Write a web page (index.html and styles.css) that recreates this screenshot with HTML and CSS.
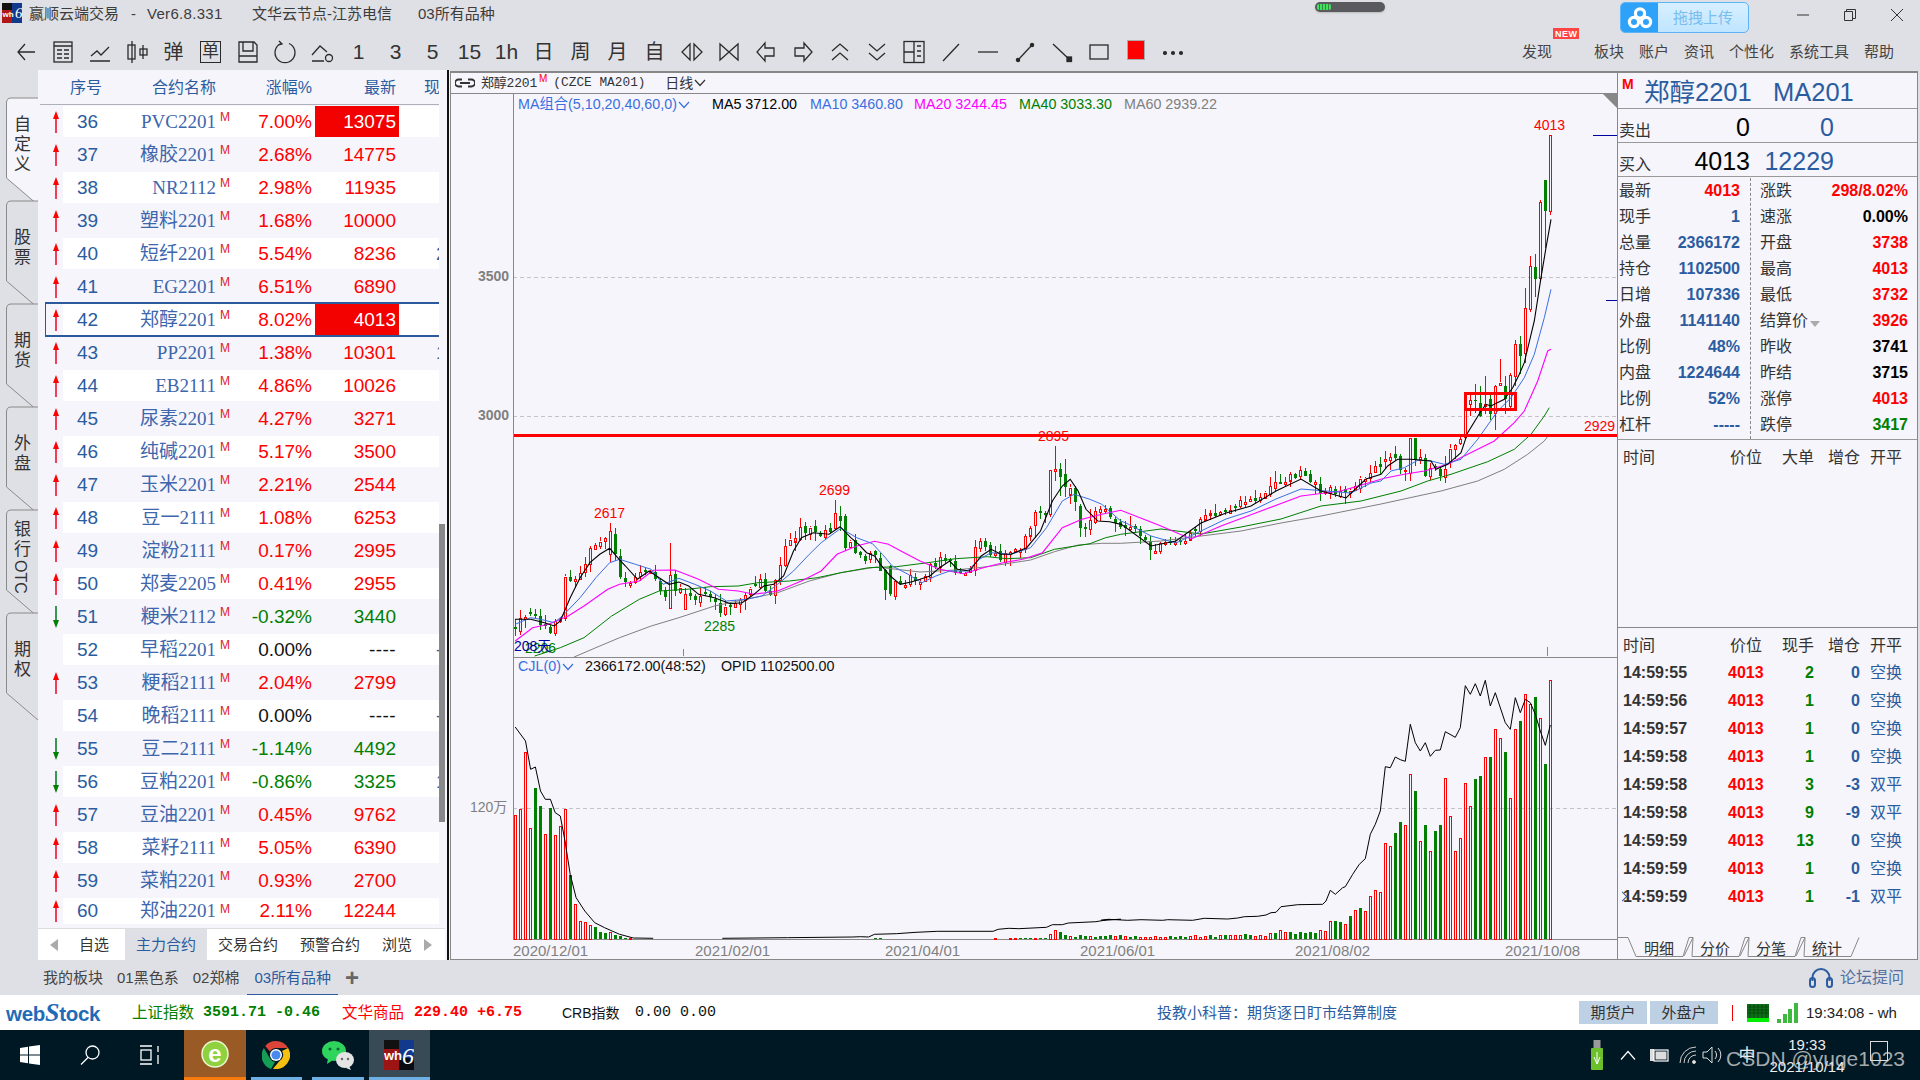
FILE: index.html
```html
<!DOCTYPE html>
<html lang="zh">
<head>
<meta charset="utf-8">
<title>赢顺云端交易</title>
<link rel="stylesheet" href="styles.css">
</head>
<body>
<svg class="defs" width="0" height="0">
  <symbol id="up" viewBox="0 0 8 22"><path d="M4 22V5" stroke="#f01030" stroke-width="1.6"/><path d="M4 0L7 8H1z" fill="#f00"/></symbol>
  <symbol id="down" viewBox="0 0 8 22"><path d="M4 0V17" stroke="#0a7f2a" stroke-width="1.6"/><path d="M4 22L7 14H1z" fill="#007f00"/></symbol>
</svg>
<div class="app">
  <header class="titlebar">
    <svg class="app-logo" viewBox="0 0 20 20"><rect width="10" height="20" fill="#b01818"/><rect width="10" height="7" fill="#111"/><rect x="10" width="10" height="20" fill="#123a8c"/><text x="0.5" y="14" class="logo-t">wh</text><text x="13" y="15" class="logo-six">6</text></svg>
    <span class="t1">赢顺云端交易</span><span class="t2">-</span><span class="t3">Ver6.8.331</span><span class="t4">文华云节点-江苏电信</span><span class="t5">03所有品种</span>
    <div class="capsule"><span class="capsule-g"></span></div>
    <div class="upload"><span class="upload-ico"><svg viewBox="0 0 26 22" width="26" height="22"><g fill="none" stroke="#fff" stroke-width="3.2"><circle cx="13" cy="6.5" r="4.6"/><circle cx="7" cy="15" r="4.6"/><circle cx="19" cy="15" r="4.6"/></g></svg></span><span class="upload-t">拖拽上传</span></div>
    <div class="winbtns">
      <span class="winbtn"><svg width="14" height="14" viewBox="0 0 14 14"><path d="M1 7h12" stroke="#333"/></svg></span>
      <span class="winbtn"><svg width="14" height="14" viewBox="0 0 14 14"><path d="M1.5 3.5h8v9h-8zM3.5 3.5v-2h9v9h-3" fill="none" stroke="#333"/></svg></span>
      <span class="winbtn"><svg width="14" height="14" viewBox="0 0 14 14"><path d="M1 1l12 12M13 1L1 13" stroke="#333"/></svg></span>
    </div>
  </header>
  <nav class="toolbar">
    <span class="ti"><svg viewBox="0 0 24 24"><path d="M21 12H4M11 4l-7 8 7 8"/></svg></span>
    <span class="ti"><svg viewBox="0 0 24 24"><rect x="3" y="2" width="18" height="20"/><path d="M3 6h18M6 10h5M13 10h5M6 14h5M13 14h5M6 18h5M13 18h5"/></svg></span>
    <span class="ti"><svg viewBox="0 0 24 24"><path d="M3 16l6-5 4 4 8-8M2 21h20"/></svg></span>
    <span class="ti"><svg viewBox="0 0 24 24"><path d="M7 1v22M18 5v14"/><rect x="3" y="5" width="7" height="14"/><rect x="15" y="9" width="7" height="6"/></svg></span>
    <span class="ti ti-t ti-c">弹</span>
    <span class="ti"><span class="ti-box">单</span></span>
    <span class="ti"><svg viewBox="0 0 24 24"><path d="M3 2h15l3 3v17H3zM7 2v9h10V2M3 16h18"/></svg></span>
    <span class="ti"><svg viewBox="0 0 24 24"><path d="M8 3.5a10 10 0 1 0 8 0M6 1l3 3-4 1"/></svg></span>
    <span class="ti"><svg viewBox="0 0 24 24"><path d="M2 15l8-9 7 6M2 21h12"/><circle cx="19" cy="18" r="3.5"/></svg></span>
    <span class="ti ti-t">1</span><span class="ti ti-t">3</span><span class="ti ti-t">5</span><span class="ti ti-t">15</span><span class="ti ti-t">1h</span>
    <span class="ti ti-t ti-c">日</span><span class="ti ti-t ti-c">周</span><span class="ti ti-t ti-c">月</span><span class="ti ti-t ti-c">自</span>
    <span class="ti"><svg viewBox="0 0 24 24"><path d="M10 4L2 12l8 8zM14 4l8 8-8 8z"/></svg></span>
    <span class="ti"><svg viewBox="0 0 24 24"><path d="M3 4v16l9-8zM21 4v16l-9-8z"/></svg></span>
    <span class="ti"><svg viewBox="0 0 24 24"><path d="M11 3L3 12l8 9v-5h9V8h-9z"/></svg></span>
    <span class="ti"><svg viewBox="0 0 24 24"><path d="M13 3l8 9-8 9v-5H4V8h9z"/></svg></span>
    <span class="ti"><svg viewBox="0 0 24 24"><path d="M4 11l8-7 8 7M4 20l8-7 8 7"/></svg></span>
    <span class="ti"><svg viewBox="0 0 24 24"><path d="M4 4l8 7 8-7M4 13l8 7 8-7"/></svg></span>
    <span class="ti"><svg viewBox="0 0 24 24"><rect x="2" y="1.5" width="20" height="21"/><path d="M2 12h10M12 1.5v21M15 6h4M15 11h4M15 16h4"/></svg></span>
    <span class="ti"><svg viewBox="0 0 24 24"><path d="M4 21L20 4"/></svg></span>
    <span class="ti"><svg viewBox="0 0 24 24"><path d="M2 12h20"/></svg></span>
    <span class="ti"><svg viewBox="0 0 24 24"><path d="M5 20L19 5"/><circle cx="5" cy="20" r="1.6" class="ico-fill"/><circle cx="19" cy="5" r="1.6" class="ico-fill"/></svg></span>
    <span class="ti"><svg viewBox="0 0 24 24"><path d="M3 4l17 16"/><rect x="17" y="17" width="4.5" height="4.5" class="ico-fill"/></svg></span>
    <span class="ti"><svg viewBox="0 0 24 24"><rect x="3" y="5" width="18" height="14"/></svg></span>
    <span class="ti"><span class="red-sq"></span></span>
    <span class="ti"><svg viewBox="0 0 24 24"><circle cx="4" cy="13" r="1.4" class="ico-fill"/><circle cx="12" cy="13" r="1.4" class="ico-fill"/><circle cx="20" cy="13" r="1.4" class="ico-fill"/></svg></span>
    <div class="menu">
      <span class="menu-i menu-new">发现<em class="new">NEW</em></span>
      <span class="menu-i">板块</span><span class="menu-i">账户</span><span class="menu-i">资讯</span><span class="menu-i">个性化</span><span class="menu-i">系统工具</span><span class="menu-i">帮助</span>
    </div>
  </nav>
  <main class="main">
    <aside class="sidetabs">
      <div class="stab active"><svg viewBox="0 0 38 108"><path d="M38 0H11q-4.500 0-4.500 5V80L38 107"/></svg><span>自定义</span></div>
      <div class="stab"><svg viewBox="0 0 38 108"><path d="M38 0H11q-4.500 0-4.500 5V80L38 107"/></svg><span>股票</span></div>
      <div class="stab"><svg viewBox="0 0 38 108"><path d="M38 0H11q-4.500 0-4.500 5V80L38 107"/></svg><span>期货</span></div>
      <div class="stab"><svg viewBox="0 0 38 108"><path d="M38 0H11q-4.500 0-4.500 5V80L38 107"/></svg><span>外盘</span></div>
      <div class="stab"><svg viewBox="0 0 38 108"><path d="M38 0H11q-4.500 0-4.500 5V80L38 107"/></svg><span>银行<u>OTC</u></span></div>
      <div class="stab"><svg viewBox="0 0 38 108"><path d="M38 0H11q-4.500 0-4.500 5V80L38 107"/></svg><span>期权</span></div>
    </aside>
    <section class="list">
      <div class="lh"><span class="h1">序号</span><span class="h2">合约名称</span><span class="h3">涨幅%</span><span class="h4">最新</span><span class="h5"><b>现手</b></span></div>
      <div class="lbody">
        <div class="rows">
          <div class="row w"><svg class="ar"><use href="#up"/></svg><div class="band"><span class="seq">36</span><span class="nm">PVC2201</span><i>M</i><span class="pct r">7.00%</span><span class="px r hot">13075</span></div></div>
          <div class="row"><svg class="ar"><use href="#up"/></svg><div class="band"><span class="seq">37</span><span class="nm">橡胶2201</span><i>M</i><span class="pct r">2.68%</span><span class="px r">14775</span></div></div>
          <div class="row w"><svg class="ar"><use href="#up"/></svg><div class="band"><span class="seq">38</span><span class="nm">NR2112</span><i>M</i><span class="pct r">2.98%</span><span class="px r">11935</span></div></div>
          <div class="row"><svg class="ar"><use href="#up"/></svg><div class="band"><span class="seq">39</span><span class="nm">塑料2201</span><i>M</i><span class="pct r">1.68%</span><span class="px r">10000</span></div></div>
          <div class="row w"><svg class="ar"><use href="#up"/></svg><div class="band"><span class="seq">40</span><span class="nm">短纤2201</span><i>M</i><span class="pct r">5.54%</span><span class="px r">8236</span><span class="nx">2</span></div></div>
          <div class="row"><svg class="ar"><use href="#up"/></svg><div class="band"><span class="seq">41</span><span class="nm">EG2201</span><i>M</i><span class="pct r">6.51%</span><span class="px r">6890</span></div></div>
          <div class="row w sel"><svg class="ar"><use href="#up"/></svg><div class="band"><span class="seq">42</span><span class="nm">郑醇2201</span><i>M</i><span class="pct r">8.02%</span><span class="px r hot">4013</span></div></div>
          <div class="row"><svg class="ar"><use href="#up"/></svg><div class="band"><span class="seq">43</span><span class="nm">PP2201</span><i>M</i><span class="pct r">1.38%</span><span class="px r">10301</span><span class="nx">1</span></div></div>
          <div class="row w"><svg class="ar"><use href="#up"/></svg><div class="band"><span class="seq">44</span><span class="nm">EB2111</span><i>M</i><span class="pct r">4.86%</span><span class="px r">10026</span></div></div>
          <div class="row"><svg class="ar"><use href="#up"/></svg><div class="band"><span class="seq">45</span><span class="nm">尿素2201</span><i>M</i><span class="pct r">4.27%</span><span class="px r">3271</span></div></div>
          <div class="row w"><svg class="ar"><use href="#up"/></svg><div class="band"><span class="seq">46</span><span class="nm">纯碱2201</span><i>M</i><span class="pct r">5.17%</span><span class="px r">3500</span></div></div>
          <div class="row"><svg class="ar"><use href="#up"/></svg><div class="band"><span class="seq">47</span><span class="nm">玉米2201</span><i>M</i><span class="pct r">2.21%</span><span class="px r">2544</span></div></div>
          <div class="row w"><svg class="ar"><use href="#up"/></svg><div class="band"><span class="seq">48</span><span class="nm">豆一2111</span><i>M</i><span class="pct r">1.08%</span><span class="px r">6253</span></div></div>
          <div class="row"><svg class="ar"><use href="#up"/></svg><div class="band"><span class="seq">49</span><span class="nm">淀粉2111</span><i>M</i><span class="pct r">0.17%</span><span class="px r">2995</span></div></div>
          <div class="row w"><svg class="ar"><use href="#up"/></svg><div class="band"><span class="seq">50</span><span class="nm">郑麦2205</span><i>M</i><span class="pct r">0.41%</span><span class="px r">2955</span></div></div>
          <div class="row"><svg class="ar"><use href="#down"/></svg><div class="band"><span class="seq">51</span><span class="nm">粳米2112</span><i>M</i><span class="pct g">-0.32%</span><span class="px g">3440</span></div></div>
          <div class="row w"><span class="ar"></span><div class="band"><span class="seq">52</span><span class="nm">早稻2201</span><i>M</i><span class="pct k">0.00%</span><span class="px k dash">----</span><span class="nx">-</span></div></div>
          <div class="row"><svg class="ar"><use href="#up"/></svg><div class="band"><span class="seq">53</span><span class="nm">粳稻2111</span><i>M</i><span class="pct r">2.04%</span><span class="px r">2799</span></div></div>
          <div class="row w"><span class="ar"></span><div class="band"><span class="seq">54</span><span class="nm">晚稻2111</span><i>M</i><span class="pct k">0.00%</span><span class="px k dash">----</span><span class="nx">-</span></div></div>
          <div class="row"><svg class="ar"><use href="#down"/></svg><div class="band"><span class="seq">55</span><span class="nm">豆二2111</span><i>M</i><span class="pct g">-1.14%</span><span class="px g">4492</span></div></div>
          <div class="row w"><svg class="ar"><use href="#down"/></svg><div class="band"><span class="seq">56</span><span class="nm">豆粕2201</span><i>M</i><span class="pct g">-0.86%</span><span class="px g">3325</span><span class="nx">1</span></div></div>
          <div class="row"><svg class="ar"><use href="#up"/></svg><div class="band"><span class="seq">57</span><span class="nm">豆油2201</span><i>M</i><span class="pct r">0.45%</span><span class="px r">9762</span></div></div>
          <div class="row w"><svg class="ar"><use href="#up"/></svg><div class="band"><span class="seq">58</span><span class="nm">菜籽2111</span><i>M</i><span class="pct r">5.05%</span><span class="px r">6390</span></div></div>
          <div class="row"><svg class="ar"><use href="#up"/></svg><div class="band"><span class="seq">59</span><span class="nm">菜粕2201</span><i>M</i><span class="pct r">0.93%</span><span class="px r">2700</span></div></div>
          <div class="row w last"><svg class="ar"><use href="#up"/></svg><div class="band"><span class="seq">60</span><span class="nm">郑油2201</span><i>M</i><span class="pct r">2.11%</span><span class="px r">12244</span></div></div>
        </div>
        <div class="track"><div class="thumb"></div></div>
      </div>
      <div class="ltabs">
        <span class="la la-l"></span>
        <span class="lt lt1">自选</span><span class="lt lt2 on">主力合约</span><span class="lt lt3">交易合约</span><span class="lt lt3">预警合约</span><span class="lt lt4">浏览</span>
        <span class="la la-r"></span>
      </div>
    </section>
    <div class="split"></div>
    <section class="chart">
      <div class="chead">
        <svg class="link" viewBox="0 0 20 10"><path d="M7 1.500H3.500a3.500 3.500 0 0 0 0 7H7M13 1.500h3.500a3.500 3.500 0 0 1 0 7H13M5 5h10" fill="none" stroke="#333" stroke-width="1.800"/></svg>
        <span class="cname">郑醇2201</span><sup class="csup">M</sup><span class="ccode">(CZCE MA201)</span>
        <span class="cper">日线</span><svg class="chev" viewBox="0 0 12 8"><path d="M1 1l5 5.500L11 1" fill="none" stroke="#333" stroke-width="1.200"/></svg>
      </div>
      <div class="cbody">
        <svg id="kchart" width="1166" height="866" viewBox="450 93 1166 866"></svg>
        <div class="legend">
          <span class="lg-ma">MA组合(5,10,20,40,60,0)<svg class="chev-b" viewBox="0 0 12 8"><path d="M1 1l5 5.500L11 1" fill="none" stroke="#3b6fe0" stroke-width="1.200"/></svg></span>
          <span class="lg-5">MA5 3712.00</span><span class="lg-10">MA10 3460.80</span><span class="lg-20">MA20 3244.45</span><span class="lg-40">MA40 3033.30</span><span class="lg-60">MA60 2939.22</span>
        </div>
        <div class="legend2"><span class="lg2-a">CJL(0)<svg class="chev-b" viewBox="0 0 12 8"><path d="M1 1l5 5.500L11 1" fill="none" stroke="#3b6fe0" stroke-width="1.200"/></svg></span><span class="lg2-b">2366172.00(48:52)</span><span class="lg2-c">OPID 1102500.00</span></div>
        <span class="corner"></span>
      </div>
    </section>
    <aside class="info">
      <div class="ihead"><b class="im">M</b><span class="iname">郑醇2201</span><span class="icode">MA201</span></div>
      <div class="quote q-sell"><span class="ql">卖出</span><span class="qp">0</span><span class="qv">0</span></div>
      <div class="quote"><span class="ql">买入</span><span class="qp">4013</span><span class="qv">12229</span></div>
      <div class="stats">
        <div class="scol scol-l">
          <div class="st"><span>最新</span><b class="red">4013</b></div>
          <div class="st"><span>现手</span><b class="blu">1</b></div>
          <div class="st"><span>总量</span><b class="blu">2366172</b></div>
          <div class="st"><span>持仓</span><b class="blu">1102500</b></div>
          <div class="st"><span>日增</span><b class="blu">107336</b></div>
          <div class="st"><span>外盘</span><b class="blu">1141140</b></div>
          <div class="st"><span>比例</span><b class="blu">48%</b></div>
          <div class="st"><span>内盘</span><b class="blu">1224644</b></div>
          <div class="st"><span>比例</span><b class="blu">52%</b></div>
          <div class="st"><span>杠杆</span><b class="blu">-----</b></div>
        </div>
        <div class="scol scol-r">
          <div class="st"><span>涨跌</span><b class="red">298/8.02%</b></div>
          <div class="st"><span>速涨</span><b>0.00%</b></div>
          <div class="st"><span>开盘</span><b class="red">3738</b></div>
          <div class="st"><span>最高</span><b class="red">4013</b></div>
          <div class="st"><span>最低</span><b class="red">3732</b></div>
          <div class="st"><span>结算价<em class="tri"></em></span><b class="red">3926</b></div>
          <div class="st"><span>昨收</span><b>3741</b></div>
          <div class="st"><span>昨结</span><b>3715</b></div>
          <div class="st"><span>涨停</span><b class="red">4013</b></div>
          <div class="st"><span>跌停</span><b class="grn">3417</b></div>
        </div>
      </div>
      <div class="bigs"><div class="tr th"><span class="c-t">时间</span><span class="c-p">价位</span><span class="c-h">大单</span><span class="c-o">增仓</span><span class="c-k">开平</span></div></div>
      <div class="trades">
        <div class="tr th"><span class="c-t">时间</span><span class="c-p">价位</span><span class="c-h">现手</span><span class="c-o">增仓</span><span class="c-k">开平</span></div>
        <div class="tr"><b class="c-t">14:59:55</b><b class="c-p red">4013</b><b class="c-h grn">2</b><b class="c-o blu">0</b><span class="c-k blu">空换</span></div>
        <div class="tr"><b class="c-t">14:59:56</b><b class="c-p red">4013</b><b class="c-h grn">1</b><b class="c-o blu">0</b><span class="c-k blu">空换</span></div>
        <div class="tr"><b class="c-t">14:59:57</b><b class="c-p red">4013</b><b class="c-h grn">1</b><b class="c-o blu">0</b><span class="c-k blu">空换</span></div>
        <div class="tr"><b class="c-t">14:59:58</b><b class="c-p red">4013</b><b class="c-h grn">1</b><b class="c-o blu">0</b><span class="c-k blu">空换</span></div>
        <div class="tr"><b class="c-t">14:59:58</b><b class="c-p red">4013</b><b class="c-h grn">3</b><b class="c-o blu">-3</b><span class="c-k blu">双平</span></div>
        <div class="tr"><b class="c-t">14:59:58</b><b class="c-p red">4013</b><b class="c-h grn">9</b><b class="c-o blu">-9</b><span class="c-k blu">双平</span></div>
        <div class="tr"><b class="c-t">14:59:59</b><b class="c-p red">4013</b><b class="c-h grn">13</b><b class="c-o blu">0</b><span class="c-k blu">空换</span></div>
        <div class="tr"><b class="c-t">14:59:59</b><b class="c-p red">4013</b><b class="c-h grn">1</b><b class="c-o blu">0</b><span class="c-k blu">空换</span></div>
        <div class="tr cur"><b class="c-t">14:59:59</b><b class="c-p red">4013</b><b class="c-h grn">1</b><b class="c-o blu">-1</b><span class="c-k blu">双平</span></div>
      </div>
      <div class="itabs">
        <svg class="itabs-bg" viewBox="0 0 300 21"><path d="M0 0.500H10L18 19.500H65L71 0.500H75L66 19M75 0.500L74 19.500H121L127 0.500H131L122 19M131 0.500L130 19.500H177L183 0.500H187L178 19M187 0.500L186 19.500H233L241 0.500" fill="none" stroke="#888"/></svg>
        <span class="it">明细</span><span class="it">分价</span><span class="it">分笔</span><span class="it">统计</span>
      </div>
    </aside>
  </main>
  <div class="boardbar">
    <span class="bb">我的板块</span><span class="bb">01黑色系</span><span class="bb">02郑棉</span><span class="bb on">03所有品种</span><span class="bb-plus">+</span>
    <div class="forum"><svg viewBox="0 0 24 20" width="24" height="20"><path d="M3.500 13V9.500a8.500 8.500 0 0 1 17 0V13" fill="none" stroke="#2b5ca0" stroke-width="2"/><rect x="1" y="10" width="5" height="9" rx="2.500" fill="none" stroke="#2b5ca0" stroke-width="2"/><rect x="18" y="10" width="5" height="9" rx="2.500" fill="none" stroke="#2b5ca0" stroke-width="2"/></svg><span>论坛提问</span></div>
  </div>
  <div class="statusbar">
    <span class="wslogo">web<b>S</b>tock</span>
    <span class="sb-l g">上证指数</span><span class="sb-v g sb-v1">3591.71 -0.46</span>
    <span class="sb-l r">文华商品</span><span class="sb-v r sb-v2">229.40 +6.75</span>
    <span class="sb-l k sb-crb">CRB指数</span><span class="sb-v k sb-v3">0.00 0.00</span>
    <span class="sb-news">投教小科普：期货逐日盯市结算制度</span>
    <span class="sb-btn">期货户</span><span class="sb-btn">外盘户</span>
    <span class="sb-sep"></span>
    <svg class="sb-mem" viewBox="0 0 22 18" width="22" height="18"><rect width="22" height="18" fill="#0f6f18"/><path d="M0 3h22M0 6h22M0 9h22M3 0v14M7 0v14M11 0v14M15 0v14M19 0v14" stroke="#064a0c"/><rect y="14" width="22" height="4" fill="#00ee00"/></svg>
    <svg class="sb-sig" viewBox="0 0 21 20" width="21" height="20"><rect x="0" y="16" width="4" height="4"/><rect x="6" y="11" width="4" height="9"/><rect x="11" y="6" width="4" height="14"/><rect x="17" y="0" width="4" height="20"/></svg>
    <span class="sb-time">19:34:08 - wh</span>
  </div>
  <footer class="taskbar">
    <span class="tb"><svg viewBox="0 0 20 20" width="20" height="20" fill="#fff"><path d="M0 3l8-1.200V9.500H0zM9 1.600L20 0v9.500H9zM0 10.500h8v7.700L0 17zM9 10.500h11V20L9 18.400z"/></svg></span>
    <span class="tb"><svg viewBox="0 0 20 20" width="20" height="20" fill="none" stroke="#fff" stroke-width="1.300"><circle cx="12.500" cy="7.500" r="6.500"/><path d="M8 12.500L1 19.500"/></svg></span>
    <span class="tb"><svg viewBox="0 0 20 20" width="20" height="20" fill="none" stroke="#fff" stroke-width="1.300"><path d="M0 1h12M0 19h12"/><rect x="1" y="5" width="10" height="10"/><path d="M18 1v6M18 10v9"/></svg></span>
    <span class="app-btn ab-e"><svg viewBox="0 0 30 30" width="30" height="30"><circle cx="15" cy="15" r="13" fill="#8fd13f"/><circle cx="15" cy="15" r="13" fill="none" stroke="#e8f8d0" stroke-width="1.500"/><text x="15" y="23" class="e-t">e</text></svg></span>
    <span class="app-btn ab-u"><svg viewBox="0 0 28 28" width="28" height="28"><path d="M14 0a14 14 0 0 1 12.100 7H14a7 7 0 0 0-6.100 3.500L3.200 5A14 14 0 0 1 14 0z" fill="#dc4437"/><path d="M1.900 7L8 17.500A7 7 0 0 0 13 21L9 28A14 14 0 0 1 1.900 7z" fill="#159d55"/><path d="M26.100 7A14 14 0 0 1 11 27.700L17.500 20A7 7 0 0 0 20 10z" fill="#f6c012"/><circle cx="14" cy="14" r="6" fill="#fff"/><circle cx="14" cy="14" r="4.600" fill="#4a8af0"/></svg></span>
    <span class="app-btn ab-u"><svg viewBox="0 0 32 30" width="32" height="30"><ellipse cx="12" cy="11" rx="12" ry="10" fill="#2ed45c"/><path d="M6 18l-1 6 6-4z" fill="#2ed45c"/><circle cx="8" cy="9" r="1.500" fill="#0a6a2c"/><circle cx="16" cy="9" r="1.500" fill="#0a6a2c"/><ellipse cx="23" cy="20" rx="9" ry="8" fill="#e4e4e4"/><path d="M27 26l2 4-5-2z" fill="#e4e4e4"/><circle cx="20" cy="19" r="1.200" fill="#666"/><circle cx="26" cy="19" r="1.200" fill="#666"/></svg></span>
    <span class="app-btn ab-w ab-u"><svg viewBox="0 0 30 30" width="30" height="30"><rect width="16" height="30" fill="#9c1414"/><rect width="16" height="9" fill="#111"/><rect x="15" width="15" height="30" fill="#123a8c"/><rect x="15" y="18" width="15" height="12" fill="#0a0a12"/><text x="0" y="20" class="wh-t">wh</text><text x="18" y="24" class="wh-6">6</text></svg></span>
    <div class="tray">
      <span class="tr-i i-usb"><svg viewBox="0 0 12 30" width="12" height="30"><rect x="2.500" width="7" height="8" fill="#999"/><rect y="8" width="12" height="22" rx="1" fill="#6cc02c"/><path d="M6 12v12M3 17l3 7 3-7" stroke="#fff" fill="none"/></svg></span>
      <span class="tr-i i-car"><svg viewBox="0 0 16 10" width="16" height="10"><path d="M1 9.500l7-8 7 8" fill="none" stroke="#fff" stroke-width="1.200"/></svg></span>
      <span class="tr-i i-bat"><svg viewBox="0 0 20 18" width="20" height="18"><rect x="1" y="3" width="4" height="12" fill="#ddd"/><rect x="5" y="4" width="14" height="11" fill="none" stroke="#fff" stroke-width="1.200"/><rect x="6.500" y="5.500" width="11" height="8" fill="#ddd"/></svg></span>
      <span class="tr-i i-wifi"><svg viewBox="0 0 18 18" width="18" height="18" fill="none" stroke="#ccc"><path d="M1 17a16 16 0 0 1 16-16M5 17a12 12 0 0 1 12-12M9 17a8 8 0 0 1 8-8"/><circle cx="15" cy="16" r="1.500" fill="#eee"/></svg></span>
      <span class="tr-i i-spk"><svg viewBox="0 0 22 22" width="22" height="22" fill="none" stroke="#ddd"><path d="M1 8h4l5-5v16l-5-5H1zM13 7a6 6 0 0 1 0 8M16 4a10 10 0 0 1 0 14"/></svg></span>
      <span class="tr-i i-zh">中</span>
      <span class="clock"><span>19:33</span><span>2021/10/14</span></span>
      <span class="notif"></span>
      <span class="wm">CSDN @yuge1023</span>
    </div>
  </footer>
</div>
<script src="chart.js"></script>
</body>
</html>
```
FILE: styles.css
```css
* { box-sizing: border-box; }
html, body { margin: 0; padding: 0; width: 1920px; height: 1080px; overflow: hidden; }
body { font-family: "Liberation Sans", "Noto Sans CJK SC", sans-serif; line-height: 1; background: #dfe0e5; color: #333; }
.defs { position: absolute; }
.app { width: 1920px; height: 1080px; display: flex; flex-direction: column; }

/* title */
.titlebar { height: 35px; display: flex; align-items: flex-start; font-size: 15px; color: #3c3c3c; position: relative; }
.app-logo { width: 20px; height: 20px; margin: 3px 0 0 2px; }
.logo-t { font: bold 8px "Liberation Sans", sans-serif; fill: #fff; }
.logo-six { font: italic 15px "Liberation Serif", serif; fill: #fff; }
.titlebar > span { line-height: 28px; white-space: nowrap; }
.t1 { margin-left: 7px; width: 90px; }
.t2 { margin-left: 12px; width: 16px; }
.t3 { width: 105px; letter-spacing: .3px; }
.t4 { width: 166px; }
.t5 { width: 90px; }
.capsule { position: absolute; left: 1315px; top: 2px; width: 70px; height: 10px; border-radius: 5px; background: #5a5a5e; box-shadow: 0 1px 2px #bbb; padding: 2px 0 0 2px; }
.capsule-g { display: block; width: 14px; height: 6px; border-radius: 2px; background: repeating-linear-gradient(90deg, #45e060 0 2px, #2f8a40 2px 3px); }
.upload { margin: 2px 0 0 auto; width: 129px; height: 31px; display: flex; border-radius: 5px; border: 1px solid #5cb3f5; overflow: hidden; background: linear-gradient(#d8f0ff, #bfe5ff); }
.upload-ico { width: 37px; background: #2ea1f8; display: flex; align-items: center; justify-content: center; }
.upload-t { flex: 1; text-align: center; font-size: 15px; line-height: 29px; color: #78bdf0; }
.winbtns { display: flex; margin-left: 30px; }
.winbtn { width: 47px; height: 30px; display: flex; align-items: center; justify-content: center; }

/* toolbar */
.toolbar { height: 35px; display: flex; align-items: center; padding: 0 0 2px 7px; position: relative; }
.ti { width: 37px; flex: none; height: 33px; display: flex; align-items: center; justify-content: center; color: #333; }
.ti svg { width: 24px; height: 24px; fill: none; stroke: #2a2a2a; stroke-width: 1.3; }
.ti svg .ico-fill { fill: #2a2a2a; }
.ti-t { font-size: 21px; }
.ti-c { font-size: 20px; }
.ti-box { width: 21px; height: 22px; border: 1.300px solid #2a2a2a; font-size: 17px; line-height: 19px; text-align: center; display: block; }
.red-sq { width: 18px; height: 20px; background: #f00; border: 1px solid #aaa; display: block; margin-top: -4px; }
.menu { margin-left: auto; display: flex; padding-right: 26px; font-size: 15px; color: #444; gap: 15px; }
.menu-new { margin-right: 27px; position: relative; }
.new { position: absolute; left: 31px; top: -16px; background: #f44; color: #fff; font: bold 9px "Liberation Sans", sans-serif; padding: 1px 2px; width: 26px; height: 11px; text-align: center; letter-spacing: .5px; }

/* main */
.main { height: 890px; display: flex; }
.sidetabs { width: 38px; flex: none; padding-top: 28px; }
.stab { height: 103px; position: relative; }
.stab svg { position: absolute; left: 0; top: 0; width: 38px; height: 108px; overflow: visible; }
.stab path { fill: #dfe0e5; stroke: #8a8a8a; }
.stab.active path { fill: #f5f5fb; }
.stab span { position: absolute; left: 12px; top: 47px; transform: translateY(-50%); writing-mode: vertical-rl; font-size: 17px; line-height: 17px; letter-spacing: 3px; color: #333; white-space: nowrap; }
.stab u { text-decoration: none; letter-spacing: 0; font-size: 16px; }

/* list */
.list { width: 409px; flex: none; background: #f5f5fb; display: flex; flex-direction: column; }
.lh { height: 35px; margin-left: 2px; display: flex; align-items: center; color: #2b5ca0; font-size: 16px; border-bottom: 1px solid #b0b0b8; width: 399px; padding-left: 5px; padding-top: 1px; }
.lh span { display: block; text-align: right; white-space: nowrap; }
.h1 { width: 57px; }
.h2 { width: 114px; }
.h3 { width: 96px; }
.h4 { width: 84px; }
.h5 { width: 43px; overflow: hidden; text-align: left !important; }
.h5 b { font-weight: 400; margin-left: 28px; display: block; width: 60px; }
.lbody { height: 819px; display: flex; overflow: hidden; padding-left: 7px; }
.rows { width: 394px; flex: none; overflow: hidden; }
.row { height: 33px; display: flex; align-items: center; font-size: 19px; position: relative; }
.row.last { height: 27px; }
.ar { width: 8px; height: 22px; margin: 0 3px 0 7px; flex: none; }
.band { flex: 1; height: 31px; display: flex; align-items: center; color: #2b5ca0; position: relative; overflow: hidden; }
.last .band { height: 26px; }
.w .band { background: #fff; }
.sel { outline: 2px solid #2b5a9c; outline-offset: -1px; width: 400px; }
.seq { width: 67px; padding-left: 14px; flex: none; }
.nm { width: 86px; flex: none; text-align: right; white-space: nowrap; font-family: "Liberation Serif", "Noto Sans CJK SC", serif; color: #3d66ad; }
.band i { font: normal 12px "Liberation Sans", sans-serif; color: #e01a2a; width: 16px; padding-left: 4px; flex: none; align-self: flex-start; margin-top: 4px; }
.pct { width: 80px; flex: none; text-align: right; }
.px { width: 84px; flex: none; margin-left: 3px; padding-right: 3px; text-align: right; height: 31px; line-height: 31px; }
.hot { background: #f30000; color: #fff !important; }
.r { color: #f00; }
.g { color: #007f00; }
.k { color: #111; }
.dash { letter-spacing: .4px; }
.nx { margin-left: 37px; flex: none; color: #2b5ca0; }
.track { width: 6px; flex: none; background: #f5f5fb; padding-top: 419px; }
.thumb { height: 298px; background: #888; }
.ltabs { height: 31px; margin-top: 5px; background: #fff; display: flex; align-items: center; font-size: 15px; width: 407px; position: relative; box-shadow: 0 -1px 0 #ddd; color: #333; }
.ltabs .lt { height: 31px; line-height: 31px; text-align: center; white-space: nowrap; }
.lt1 { width: 62px; margin-left: 5px; }
.lt2 { width: 82px; }
.lt3 { width: 82px; }
.lt4 { width: 52px; }
.lt.on { background: #dfe0e5; color: #2b5ca0; }
.la { width: 0; height: 0; border: 6px solid transparent; }
.la-l { border-right: 8px solid #aaa; border-left-width: 0; margin-left: 12px; }
.la-r { border-left: 8px solid #aaa; border-right-width: 0; margin-left: 1px; }
.split { width: 3px; flex: none; background: linear-gradient(90deg, #111 0 2px, #f5f5fb 2px); height: 890px; }

/* chart */
.chart { width: 1167px; flex: none; margin-top: 1px; background: #f5f5fb; border: 1px solid #888; border-width: 2px 0 1px 1px; display: flex; flex-direction: column; }
.chead { height: 21px; flex: none; display: flex; align-items: center; border-bottom: 1px solid #888; font-size: 14px; color: #333; }
.link { width: 20px; height: 10px; margin-left: 4px; }
.cname { margin-left: 6px; font-family: "Liberation Mono", "Noto Sans CJK SC", monospace; font-size: 13px; letter-spacing: -.2px; }
.csup { font-size: 10px; color: #f00; margin: -8px 0 0 2px; }
.ccode { margin-left: 6px; font-family: "Liberation Mono", monospace; font-size: 12.800px; width: 112px; }
.cper { font-size: 14px; }
.chev { width: 12px; height: 8px; margin-left: 1px; }
.cbody { position: relative; flex: 1; overflow: hidden; }
#kchart { display: block; }
#kchart text { font-family: "Liberation Sans", "Noto Sans CJK SC", sans-serif; }
.legend { position: absolute; left: 67px; top: 3px; display: flex; font-size: 14.300px; white-space: nowrap; }
.legend span { display: block; }
.chev-b { width: 12px; height: 8px; margin-left: 1px; }
.lg-ma { color: #3b6fe0; width: 194px; }
.lg-5 { color: #000; width: 98px; }
.lg-10 { color: #3b6fe0; width: 104px; }
.lg-20 { color: #f0f; width: 105px; }
.lg-40 { color: #007f00; width: 105px; }
.lg-60 { color: #808080; }
.legend2 { position: absolute; left: 67px; top: 565px; display: flex; font-size: 14.300px; white-space: nowrap; color: #111; }
.lg2-a { color: #3b6fe0; width: 67px; }
.lg2-b { width: 136px; }
.corner { position: absolute; right: 0; top: 0; border: 7px solid transparent; border-top: 7px solid #888; border-right: 7px solid #888; }

/* info */
.info { width: 301px; flex: none; margin-top: 1px; background: #f5f5fb; border: 1px solid #888; border-width: 2px 1px 1px 1px; display: flex; flex-direction: column; color: #333; }
.ihead { height: 36px; flex: none; border-bottom: 1px solid #999; display: flex; position: relative; color: #2b5ca0; font-size: 25.500px; line-height: 38px; white-space: nowrap; }
.im { position: absolute; left: 4px; top: 4px; font-size: 14px; line-height: 14px; color: #f00; }
.iname { margin-left: 26px; width: 129px; }
.icode { width: 90px; }
.quote { height: 34px; flex: none; border-bottom: 1px solid #999; display: flex; font-size: 25px; line-height: 36px; }
.ql { font-size: 16px; width: 36px; margin-left: 1px; line-height: 44px; }
.qp { width: 95px; text-align: right; color: #000; }
.qv { width: 84px; text-align: right; color: #2b5ca0; }
.stats { height: 263px; flex: none; border-bottom: 1px solid #999; display: flex; padding-top: 1px; }
.scol-l { width: 133px; border-right: 1px dashed #888; padding: 0 10px 0 1px; }
.scol-r { flex: 1; padding: 0 9px 0 9px; }
.st { height: 26px; display: flex; justify-content: space-between; align-items: center; font-size: 16px; }
.st b { color: #000; }
.st span { display: flex; align-items: flex-end; }
.tri { width: 0; height: 0; border: 5px solid transparent; border-top: 6px solid #aaa; border-bottom-width: 0; margin: 0 0 2px 2px; }
.st .red, .red { color: #f00; }
.st .blu, .blu { color: #2b5ca0; }
.st .grn, .grn { color: #007f00; }
.bigs { height: 188px; flex: none; border-bottom: 1px solid #888; padding-top: 8px; }
.trades { height: 309px; flex: none; padding-top: 8px; }
.tr { display: flex; height: 28px; align-items: center; font-size: 16px; position: relative; white-space: nowrap; }
.th { height: 20px; margin-bottom: 3px; }
.c-t { width: 110px; padding-left: 5px; flex: none; color: #333; }
.c-p { width: 50px; flex: none; }
.c-h { width: 36px; flex: none; text-align: right; }
.c-o { width: 46px; flex: none; text-align: right; }
.c-k { margin-left: 10px; font-weight: 400; }
.bigs .c-p, .th .c-p { padding-left: 2px; }
.cur::before { content: ""; position: absolute; left: 1px; top: 10px; width: 6px; height: 6px; border: solid #2b5ca0; border-width: 1px 1px 0 0; transform: rotate(45deg); }
.itabs { flex: 1; position: relative; display: flex; padding-left: 13px; font-size: 15px; align-items: center; }
.itabs-bg { position: absolute; left: 0; top: 0; width: 300px; height: 21px; }
.it { width: 56px; text-align: center; position: relative; color: #333; }

/* board bar */
.boardbar { height: 35px; display: flex; align-items: flex-start; padding-left: 36px; font-size: 15px; color: #444; }
.bb { height: 35px; line-height: 35px; padding: 0 7px; white-space: nowrap; }
.bb.on { color: #2b5ca0; border-bottom: 1px solid #2b5ca0; margin-left: 1px; }
.bb-plus { font-size: 24px; font-weight: 700; color: #666; margin-left: 7px; line-height: 35px; }
.forum { margin-left: auto; display: flex; align-items: center; gap: 7px; height: 35px; padding-right: 16px; color: #55709f; font-size: 16px; }

/* status bar */
.statusbar { height: 35px; background: #fff; display: flex; align-items: center; font-size: 15.500px; white-space: nowrap; }
.wslogo { width: 83px; margin-left: 6px; font: bold 20.500px "Liberation Sans", sans-serif; color: #1f6bb8; letter-spacing: -.3px; }
.wslogo b { font: italic bold 26px "Liberation Serif", serif; }
.sb-l { flex: none; }
.sb-l.g { margin-left: 43px; width: 71px; }
.sb-l.r { width: 72px; }
.sb-v { flex: none; font: bold 15px "Liberation Mono", monospace; }
.sb-v1 { width: 139px; }
.sb-v2 { width: 148px; }
.sb-crb { width: 73px; font-size: 14px; }
.sb-v.k { font-weight: 400; }
.sb-v3 { width: 522px; }
.sb-news { color: #2b5ca0; font-size: 15px; width: 422px; }
.sb-btn { width: 68px; height: 23px; background: #bed0e3; text-align: center; line-height: 23px; margin-right: 3px; font-size: 15px; color: #333; }
.sb-sep { width: 1px; height: 16px; background: #e00; margin: 0 14px 0 11px; }
.sb-sig { fill: #3eb83e; margin-left: 8px; }
.sb-time { margin-left: 8px; font-size: 15px; color: #222; }

/* taskbar */
.taskbar { height: 50px; background: #001824; display: flex; align-items: stretch; }
.tb { width: 60px; display: flex; align-items: center; justify-content: center; }
.app-btn { width: 61.500px; display: flex; align-items: center; justify-content: center; position: relative; }
.ab-e { margin-left: 4px; background: #995a26; border-bottom: 3px solid #f77a0c; }
.ab-u::after { content: ""; position: absolute; left: 5px; right: 5px; bottom: 0; height: 3px; background: #6fb0e4; }
.ab-w { background: #384a55; }
.ab-w::after { left: 0; right: 0; }
.e-t { font: bold 24px "Liberation Sans", sans-serif; fill: #fff; text-anchor: middle; }
.wh-t { font: bold 13px "Liberation Sans", sans-serif; fill: #fff; }
.wh-6 { font: italic 24px "Liberation Serif", serif; fill: #fff; }
.tray { margin-left: auto; display: flex; align-items: center; padding-right: 32px; position: relative; color: #eee; }
.tr-i { display: flex; align-items: center; justify-content: center; height: 50px; }
.i-usb { width: 31px; }
.i-car { width: 31px; }
.i-bat { width: 31px; }
.i-wifi { width: 27px; }
.i-spk { width: 24px; }
.i-zh { width: 44px; font-size: 17px; }
.clock { width: 76px; display: flex; flex-direction: column; align-items: center; gap: 7px; font-size: 15px; white-space: nowrap; }
.notif { width: 18px; height: 20px; border: 1px solid #ddd; margin-left: 25px; margin-top: -8px; }
.wm { position: absolute; right: 15px; top: 18px; font-size: 21px; color: rgba(220,220,220,.75); white-space: nowrap; }
```
FILE: chart.js
```js
(function () {
  var svg = document.getElementById('kchart');
  var RED = '#f00', GRN = '#007f00';
  var out = [];
  var seed = 12345;
  function rnd() { seed = (seed * 1103515245 + 12345) & 0x7fffffff; return seed / 0x7fffffff; }
  function X9(a) { return a.map(function (p) { return [500 + p[0] / 2.53, 420 + p[1] / 3]; }); }
  function X8(a) { return a.map(function (p) { return [1380 + p[0] / 3, 120 + p[1] / 3]; }); }
  function interp(path, x) {
    for (var k = 1; k < path.length; k++) {
      if (x <= path[k][0]) {
        var a = path[k - 1], b = path[k], t = (x - a[0]) / (b[0] - a[0] || 1);
        return a[1] + (b[1] - a[1]) * t;
      }
    }
    return path[path.length - 1][1];
  }
  function cx(i) { return 514 + 5 * i; }
  function rect(x, y, w, h, fill) { out.push('<rect x="' + x + '" y="' + y.toFixed(0) + '" width="' + w + '" height="' + Math.max(1, h).toFixed(0) + '" fill="' + fill + '" shape-rendering="crispEdges"/>'); }
  function hollow(x, y, w, h, col) {
    rect(x, y, w, 1, col); rect(x, y + h, w, 1, col); rect(x, y, 1, h, col); rect(x + w - 1, y, 1, h + 1, col);
  }
  function poly(pts, col, w) {
    out.push('<polyline fill="none" stroke="' + col + '" stroke-width="' + w + '" points="' + pts.map(function (p) { return p[0].toFixed(1) + ',' + p[1].toFixed(1); }).join(' ') + '"/>');
  }
  function txt(x, y, s, col, size, extra) {
    out.push('<text x="' + x + '" y="' + y + '" fill="' + col + '" font-size="' + size + '" ' + (extra || '') + '>' + s + '</text>');
  }
  function candle(i, top, bot, hi, lo, col) {
    var c = cx(i);
    if (bot - top < 1) bot = top + 1;
    if (col === RED) {
      rect(c, hi, 1, top - hi, col); rect(c, bot, 1, lo - bot, col);
      hollow(c - 1, Math.round(top), 3, Math.round(bot - top), col);
    } else {
      rect(c, hi, 1, lo - hi, col);
      rect(c - 1, top, 3, bot - top, col);
    }
  }

  /* grid */
  [276.5, 415.5, 807.5].forEach(function (y) {
    out.push('<path d="M512 ' + y + 'H1616" stroke="#c4c4c8" stroke-dasharray="4 3"/>');
  });

  /* price candles */
  var path1 = X9([[36, 620], [60, 580], [75, 570], [88, 575], [100, 620], [125, 625], [150, 580], [162, 480], [176, 480], [200, 465], [213, 425], [226, 365], [240, 370], [277, 345], [290, 370], [302, 470], [315, 490], [340, 470], [365, 445], [378, 455], [400, 510], [428, 520], [450, 490], [466, 540], [492, 535], [515, 525], [540, 535], [565, 565], [590, 535], [630, 510], [655, 480], [680, 520], [693, 470], [705, 440], [718, 375], [745, 360], [757, 310], [770, 330], [795, 335], [820, 340], [835, 345], [845, 280], [858, 290], [870, 320], [885, 375], [920, 410], [945, 410], [960, 480], [972, 500], [985, 480], [1010, 490], [1023, 490], [1035, 460], [1060, 480], [1075, 470], [1085, 440], [1110, 415], [1135, 415], [1150, 450], [1165, 470], [1187, 440], [1200, 380], [1225, 365], [1238, 400], [1265, 410], [1290, 380], [1315, 375], [1340, 310], [1352, 265], [1377, 270], [1390, 150], [1415, 150], [1427, 160], [1440, 210], [1465, 260], [1478, 320], [1490, 300], [1515, 260], [1540, 290], [1568, 310]]);
  var path = path1.concat([[1127, 524], [1151, 549], [1182, 539], [1200, 520], [1225, 508], [1249, 500], [1274, 484], [1298, 471], [1316, 487], [1347, 490], [1371, 471], [1384, 462]]);
  var ov = {
    19: [330, 400, 305, 425, RED], 20: [340, 400, 322, 420, GRN], 31: [462, 560, 365, 562, RED], 34: [520, 565, 500, 566, RED],
    41: [545, 575, 520, 588, GRN], 64: [275, 320, 237, 325, RED], 65: [285, 300, 255, 330, GRN], 66: [285, 380, 280, 390, GRN],
    107: [148, 280, 146, 290, RED], 108: [145, 150, 75, 180, RED], 109: [145, 170, 125, 225, GRN], 110: [160, 200, 115, 230, GRN],
    111: [200, 220, 190, 250, RED], 113: [255, 320, 250, 350, GRN], 75: [435, 520, 432, 525, GRN], 73: [410, 450, 395, 450, GRN]
  };
  var prev = interp(path, cx(0));
  for (var i = 0; i < 174; i++) {
    var c, o, top, bot, hi, lo, col;
    if (ov[i]) {
      var v = ov[i];
      candle(i, 420 + v[0] / 3, 420 + v[1] / 3, 420 + v[2] / 3, 420 + v[3] / 3, v[4]);
      prev = 420 + (v[4] === RED ? v[0] : v[1]) / 3;
      continue;
    }
    c = interp(path, cx(i)) + (rnd() - 0.5) * 9;
    o = prev + (rnd() - 0.5) * 4;
    if (Math.abs(c - o) < 1.5) o = c + (rnd() > 0.5 ? 2 : -2);
    top = Math.min(o, c); bot = Math.max(o, c);
    hi = top - rnd() * rnd() * 12 - 1; lo = bot + rnd() * rnd() * 12 + 1;
    col = c < o ? RED : GRN;
    candle(i, top, bot, hi, lo, col);
    prev = c;
  }
  var last = [
    [13, 1015, 1020, 990, 1045, RED], [28, 1008, 1018, 995, 1048, RED], [43, 1000, 1012, 975, 1020, GRN], [58, 1005, 1048, 1000, 1060, GRN], [73, 1048, 1052, 1040, 1078, RED],
    [88, 952, 1058, 950, 1080, RED], [103, 950, 1015, 950, 1035, GRN], [118, 1008, 1015, 985, 1030, RED], [133, 1010, 1065, 1000, 1068, GRN], [148, 1042, 1065, 1025, 1078, RED],
    [163, 1035, 1042, 1030, 1050, GRN], [178, 1045, 1065, 1035, 1080, GRN], [193, 1045, 1070, 1005, 1085, RED], [208, 983, 1020, 970, 1040, RED], [223, 973, 985, 970, 1015, RED],
    [238, 955, 968, 940, 970, RED], [253, 865, 950, 860, 950, RED], [268, 838, 851, 815, 885, RED], [283, 838, 842, 790, 878, GRN], [298, 846, 885, 795, 888, GRN],
    [313, 848, 855, 765, 878, RED], [328, 834, 878, 815, 895, GRN], [343, 795, 875, 793, 925, RED], [358, 785, 791, 715, 795, RED], [373, 795, 835, 765, 878, GRN],
    [388, 762, 855, 755, 866, RED], [403, 670, 765, 658, 795, RED], [418, 670, 706, 645, 760, GRN], [433, 560, 695, 500, 725, RED], [448, 436, 565, 405, 575, RED],
    [463, 438, 473, 400, 530, GRN], [478, 243, 470, 236, 480, RED], [493, 176, 268, 176, 380, GRN], [508, 43, 272, 43, 280, RED]
  ];
  last.forEach(function (d, k) {
    candle(174 + k, 120 + d[1] / 3, 120 + d[2] / 3, 120 + d[3] / 3, 120 + d[4] / 3, d[5]);
  });

  /* moving averages */
  var ma5 = X9([[36, 595], [75, 595], [110, 605], [135, 615], [150, 600], [175, 530], [200, 470], [225, 425], [250, 400], [275, 382], [295, 410], [315, 435], [345, 475], [375, 450], [400, 470], [425, 490], [450, 483], [475, 495], [500, 520], [540, 530], [580, 548], [610, 545], [640, 520], [665, 495], [690, 490], [715, 465], [740, 390], [760, 350], [790, 335], [830, 340], [858, 317], [885, 350], [905, 370], [925, 395], [945, 405], [960, 430], [985, 465], [1010, 490], [1040, 482], [1060, 475], [1085, 465], [1110, 440], [1135, 420], [1155, 445], [1185, 450], [1215, 405], [1240, 385], [1265, 400], [1290, 400], [1330, 380], [1365, 330], [1395, 240], [1420, 195], [1440, 175], [1460, 210], [1480, 265], [1510, 300], [1540, 302], [1568, 310]])
    .concat([[1120, 523], [1150, 545], [1175, 540], [1200, 522], [1225, 512], [1250, 505], [1275, 490], [1300, 478], [1320, 490], [1345, 497], [1365, 478]])
    .concat(X8([[0, 1060], [20, 1035], [50, 1015], [90, 1015], [150, 1020], [165, 1045], [200, 1030], [240, 995], [260, 935], [300, 870], [315, 850], [330, 855], [370, 835], [395, 800], [415, 760], [430, 725], [460, 600], [480, 470], [495, 380], [510, 295]]));
  var ma10 = X9([[36, 610], [75, 590], [100, 595], [135, 605], [160, 580], [200, 530], [240, 470], [275, 425], [300, 415], [340, 430], [380, 445], [410, 490], [450, 472], [490, 490], [530, 510], [570, 540], [620, 535], [660, 525], [700, 490], [740, 450], [780, 400], [810, 365], [860, 322], [900, 350], [940, 368], [965, 400], [990, 435], [1030, 460], [1065, 485], [1100, 465], [1135, 450], [1180, 450], [1210, 415], [1240, 395], [1290, 400], [1340, 380], [1380, 320], [1420, 240], [1450, 220], [1490, 235], [1520, 250], [1568, 300]])
    .concat([[1125, 522], [1150, 535], [1175, 542], [1200, 530], [1225, 518], [1250, 510], [1275, 498], [1300, 488], [1325, 490], [1350, 492], [1370, 482]])
    .concat(X8([[0, 1080], [30, 1050], [70, 1040], [110, 1018], [150, 1020], [190, 1030], [240, 1015], [290, 955], [350, 870], [390, 830], [430, 770], [460, 700], [490, 590], [510, 505]]));
  var ma20 = X9([[36, 660], [80, 620], [120, 610], [170, 585], [210, 555], [270, 505], [300, 490], [350, 480], [385, 448], [440, 447], [500, 475], [550, 505], [600, 510], [640, 520], [700, 510], [760, 480], [810, 450], [850, 400], [900, 375], [945, 361], [980, 370], [1020, 395], [1060, 420], [1110, 445], [1170, 458], [1220, 440], [1270, 425], [1320, 415], [1370, 395], [1420, 320], [1470, 295], [1520, 280], [1568, 268]])
    .concat([[1160, 525], [1190, 538], [1220, 525], [1260, 510], [1300, 495], [1340, 490]])
    .concat(X8([[10, 1072], [70, 1060], [130, 1050], [200, 1030], [260, 1000], [340, 960], [400, 905], [430, 870], [470, 780], [500, 690], [510, 685]]));
  var ma40 = X9([[85, 705], [150, 680], [210, 650], [280, 585], [350, 535], [400, 510], [470, 505], [530, 497], [600, 495], [650, 485], [730, 480], [800, 470], [860, 455], [930, 440], [1000, 437], [1080, 425], [1150, 413], [1230, 407], [1280, 413], [1340, 410], [1400, 385], [1490, 368], [1530, 350], [1568, 340]])
    .concat([[1160, 528], [1200, 533], [1240, 526], [1280, 518], [1320, 505], [1360, 500], [1400, 490]])
    .concat(X8([[140, 1080], [210, 1060], [320, 1022], [400, 985], [450, 940], [490, 885], [505, 860]]));
  var ma60 = X9([[185, 708], [250, 675], [300, 650], [380, 615], [450, 590], [540, 555], [620, 535], [700, 515], [780, 480], [860, 455], [950, 438], [1060, 453], [1150, 447], [1230, 437], [1340, 417], [1400, 392], [1460, 372], [1520, 367], [1568, 367]])
    .concat([[1160, 540], [1200, 535], [1240, 530], [1280, 522], [1320, 515], [1380, 503], [1440, 490]])
    .concat(X8([[290, 1080], [370, 1045], [440, 1000], [490, 960], [505, 940]]));
  poly(ma60, '#808080', 1); poly(ma40, GRN, 1); poly(ma20, '#f0f', 1.1); poly(ma10, '#3b6fe0', 1); poly(ma5, '#000', 1.1);

  /* key lines and boxes */
  rect(512, 433, 1104, 3, RED);
  out.push('<rect x="1464.500" y="392.500" width="50" height="16" fill="none" stroke="' + RED + '" stroke-width="3.500" shape-rendering="crispEdges"/>');
  rect(1592, 134, 24, 1, '#0000a0');
  rect(1605, 299, 11, 1, '#0000a0');
  rect(682, 648, 1, 7, '#888');
  rect(1546, 646, 1, 9, '#888');

  /* axes */
  rect(512, 93, 1, 845, '#888');
  rect(512, 656, 1104, 1, '#888');
  rect(512, 938, 1104, 1, '#888');
  txt(477, 280, '3500', '#808080', 14, 'font-weight="700"');
  txt(477, 419, '3000', '#808080', 14, 'font-weight="700"');
  txt(469, 811, '120万', '#808080', 14);

  /* labels */
  txt(1533, 129, '4013', RED, 14);
  txt(1583, 430, '2929', RED, 14);
  txt(1037, 440, '2895', RED, 14);
  txt(818, 494, '2699', RED, 14);
  txt(593, 517, '2617', RED, 14);
  txt(703, 630, '2285', GRN, 14);
  txt(524, 652, '2206', GRN, 14);
  txt(513, 650, '208天', '#0000a0', 14);

  /* volume */
  var volHead = [[462, 1], [445, 1], [274, 1], [502, 1], [381, 0], [436, 0], [520, 1], [441, 0], [523, 1], [496, 1], [445, 1], [642, 0], [730, 1], [781, 1], [784, 1], [793, 1], [798, 0], [813, 0], [816, 0], [813, 1], [822, 0], [825, 0], [831, 0], [830, 1]];
  volHead.forEach(function (d, k) { vbar(k, 660 + d[0] / 3, d[1]); });
  [[72, 831, 0], [73, 831, 0], [96, 832, 1], [99, 832, 1], [100, 832, 1], [101, 832, 0], [102, 832, 0], [103, 832, 0], [104, 832, 1], [105, 830, 0], [106, 830, 0], [107, 820, 1], [108, 808, 1], [109, 813, 0], [110, 822, 0], [111, 826, 1], [112, 828, 0], [113, 823, 0], [114, 826, 0], [115, 826, 1], [116, 829, 0]].forEach(function (d) { vbar(d[0], 660 + d[1] / 3, d[2]); });
  var volTail = [[826, 1], [823, 0], [826, 0], [826, 0], [823, 0], [826, 1], [823, 0], [826, 1], [829, 0], [826, 0], [829, 1], [829, 1], [829, 1], [826, 1], [829, 1], [829, 1], [826, 0], [829, 0], [826, 0], [829, 0], [826, 1], [823, 1], [829, 1], [826, 1], [823, 0], [828, 0], [823, 1], [823, 0], [823, 1], [823, 1], [823, 1], [820, 0], [823, 0], [826, 1], [823, 1], [826, 1], [817, 1], [816, 0], [808, 1], [814, 1], [813, 0], [819, 0], [813, 0], [816, 0], [813, 0], [816, 0], [808, 1], [811, 1], [781, 1], [780, 0], [784, 0], [790, 1], [765, 0], [748, 1], [741, 0], [751, 1], [706, 1], [688, 1], [694, 1], [547, 1], [556, 1], [516, 0], [483, 0], [493, 1], [338, 1], [390, 0], [541, 1], [492, 0], [571, 1], [510, 0], [492, 0], [352, 1], [466, 1], [571, 1], [532, 1], [365, 1], [436, 1], [354, 0], [346, 0], [289, 1], [288, 0], [205, 1], [230, 1], [273, 0], [412, 1], [205, 1], [180, 0], [100, 1], [128, 1], [108, 0], [170, 1], [310, 0], [58, 1]];
  volTail.slice(-91).forEach(function (d, k) { vbar(117 + k, 660 + d[0] / 3, d[1]); });
  function vbar(i, y, red) {
    var c = cx(i), h = 938 - Math.round(y);
    if (h < 1) return;
    if (red) { hollow(c - 1, Math.round(y), 3, h, RED); } else { rect(c - 1, y, 3, h, GRN); }
  }
  var cjl = X9([[36, 198], [62, 240], [75, 325], [87, 318], [100, 390], [112, 415], [125, 415], [137, 455], [150, 465], [162, 540], [175, 640], [190, 710], [212, 750], [237, 785], [262, 800], [300, 820], [335, 831], [385, 832]]).map(function (p) { return [p[0], p[1] + 240]; });
  var cjl2 = X9([[560, 832], [725, 830], [890, 828], [910, 827], [930, 828], [945, 820], [1000, 818], [1050, 814], [1105, 811], [1245, 811], [1258, 805], [1285, 802], [1310, 803], [1380, 799], [1395, 791], [1420, 791], [1435, 786], [1505, 782], [1535, 776], [1568, 775]]).map(function (p) { return [p[0], p[1] + 240]; });
  var cjl3 = [[0, 778], [22, 775], [80, 778], [120, 776], [185, 778], [200, 776], [275, 778], [310, 772], [380, 774], [410, 771], [430, 767], [470, 766], [495, 762], [510, 755], [525, 754], [540, 737], [590, 731], [665, 730], [675, 720], [688, 688], [703, 700], [725, 680], [733, 677], [755, 640], [775, 610], [793, 593], [808, 520], [823, 490], [838, 450], [853, 317], [868, 320], [883, 288], [898, 296], [913, 301], [928, 190], [943, 245], [958, 270], [973, 245], [988, 286], [1003, 268], [1018, 267], [1033, 212], [1063, 229], [1078, 200], [1093, 74], [1108, 100], [1123, 68], [1138, 105], [1153, 58], [1168, 135], [1183, 95], [1213, 185], [1228, 205], [1243, 110], [1258, 155], [1273, 115], [1288, 125], [1303, 160], [1318, 210], [1333, 253], [1348, 192]].map(function (p) { return [1100 + p[0] / 3, 660 + p[1] / 3]; });
  poly(cjl, '#000', 1);
  poly(cjl2.concat(cjl3), '#000', 1);

  /* date labels */
  [[512, '2020/12/01'], [694, '2021/02/01'], [884, '2021/04/01'], [1079, '2021/06/01'], [1294, '2021/08/02'], [1504, '2021/10/08']].forEach(function (d) {
    txt(d[0], 955, d[1], '#808080', 15);
  });
  svg.innerHTML = out.join('');
})();
```
